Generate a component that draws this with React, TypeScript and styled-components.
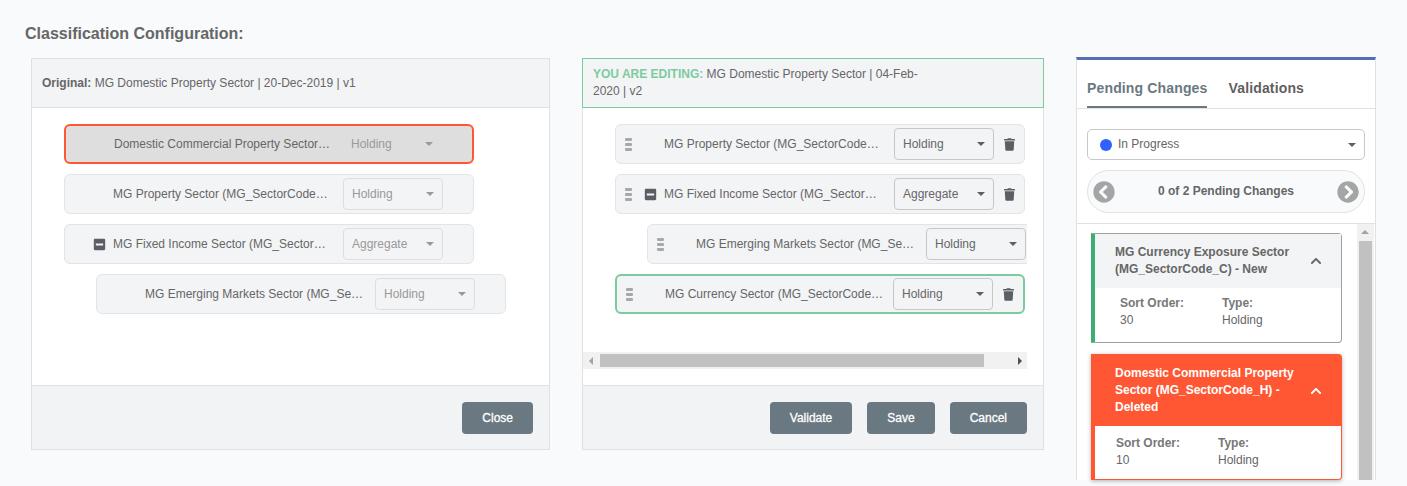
import styled, { createGlobalStyle } from "styled-components";
import {
  FaChevronCircleLeft,
  FaChevronCircleRight,
  FaChevronUp,
  FaMinusSquare,
  FaTrash,
} from "react-icons/fa";

const GlobalStyle = createGlobalStyle`
  html, body {
    margin: 0;
    height: 486px;
    overflow: hidden;
    background: #f9fafc;
    font-family: "Liberation Sans", Arial, sans-serif;
    color: #666;
    font-size: 12px;
  }
`;

const Page = styled.div`
  padding: 24px 25px 0;
  height: 486px;
  box-sizing: border-box;
`;

const Title = styled.h1`
  margin: 0 0 13px;
  font-size: 16px;
  line-height: 20px;
  font-weight: 700;
  color: #666;
`;

const Columns = styled.div`
  display: flex;
  align-items: flex-start;
  gap: 32px;
  margin-left: 6px;
`;

const Panel = styled.section<{ $width: number }>`
  display: flex;
  flex-direction: column;
  width: ${({ $width }) => $width}px;
  height: 392px;
  margin-top: 1px;
  box-sizing: border-box;
  background: #fff;
  border: 1px solid #dfe1e4;
  border-top: none;
`;

const PanelHeader = styled.header<{ $editing?: boolean }>`
  display: flex;
  align-items: center;
  box-sizing: border-box;
  height: 50px;
  margin: 0 ${({ $editing }) => ($editing ? "-1px" : "0")};
  padding: 0 10px;
  background: #f3f4f6;
  border: 1px solid ${({ $editing }) => ($editing ? "#7ccb9f" : "#dfe1e4")};
  ${({ $editing }) => ($editing ? "" : "border-width: 1px 0;")}
  line-height: 17px;
  font-size: 12px;
`;

const HeaderText = styled.div`
  max-width: 340px;
`;

const HeaderLabel = styled.strong<{ $editing?: boolean }>`
  color: ${({ $editing }) => ($editing ? "#7ccb9f" : "#666")};
`;

const PanelBody = styled.div<{ $editing?: boolean }>`
  flex: 1;
  min-height: 0;
  display: flex;
  flex-direction: column;
  padding: 0 ${({ $editing }) => ($editing ? "16px" : "0")} 16px 0;
`;

const Tree = styled.div`
  flex: 1;
  min-height: 0;
  overflow: hidden;
  display: flex;
  flex-direction: column;
  gap: 10px;
  padding: 16px 0 0 32px;
`;

const Row = styled.div<{ $indent?: boolean; $tone?: "deleted" | "added" }>`
  display: flex;
  flex: none;
  align-items: center;
  box-sizing: border-box;
  width: 410px;
  height: 40px;
  margin-left: ${({ $indent }) => ($indent ? "32px" : "0")};
  padding-right: 9px;
  border-radius: 6px;
  background: ${({ $tone }) => ($tone === "deleted" ? "#dedede" : "#f3f4f6")};
  border: ${({ $tone }) =>
    $tone === "deleted"
      ? "2px solid #ff5733"
      : $tone === "added"
        ? "2px solid #7ccb9f"
        : "1px solid #e2e4e7"};
`;

const HandleSlot = styled.div`
  flex: none;
  display: flex;
  justify-content: center;
  width: 24px;
`;

const ExpanderSlot = styled.div`
  flex: none;
  display: flex;
  width: 24px;
  padding-left: 4px;
  box-sizing: border-box;
  color: #5a5f66;
  font-size: 13px;
`;

const Label = styled.div<{ $tight?: boolean }>`
  flex: 1;
  min-width: 0;
  margin-right: ${({ $tight }) => ($tight ? "9px" : "10px")};
  white-space: nowrap;
  overflow: hidden;
  text-overflow: ellipsis;
  line-height: 17px;
`;

const TrashSlot = styled.div`
  flex: none;
  display: flex;
  width: 11px;
  margin-left: 10px;
  color: #5a5f66;
  font-size: 13px;
`;

const Select = styled.div<{ $disabled?: boolean; $shade?: boolean }>`
  flex: none;
  position: relative;
  box-sizing: border-box;
  width: 100px;
  height: 32px;
  line-height: 30px;
  padding-left: 8px;
  border-radius: 4px;
  border: 1px solid ${({ $disabled }) => ($disabled ? "#dcdee0" : "#c5c7c9")};
  background: ${({ $shade }) => ($shade ? "#dedede" : "#f3f4f6")};
  color: ${({ $disabled }) => ($disabled ? "#999" : "#666")};
`;

const Caret = styled.span<{ $muted?: boolean }>`
  position: absolute;
  top: 50%;
  right: 8px;
  margin-top: -2px;
  border-style: solid;
  border-width: 4px 4px 0;
  border-color: ${({ $muted }) => ($muted ? "#999" : "#5f5f5f")} transparent transparent;
`;

const HScroll = styled.div`
  position: relative;
  flex: none;
  display: flex;
  align-items: center;
  height: 17px;
  background: #f1f1f1;
`;

const HThumb = styled.div`
  width: 384px;
  height: 13px;
  margin-left: 17px;
  background: #c1c1c1;
`;

const ArrowLeft = styled.span`
  position: absolute;
  left: 6px;
  border-style: solid;
  border-width: 4px 4px 4px 0;
  border-color: transparent #a3a3a3 transparent transparent;
`;

const ArrowRight = styled.span`
  position: absolute;
  right: 5px;
  border-style: solid;
  border-width: 4px 0 4px 4px;
  border-color: transparent transparent transparent #505050;
`;

const ArrowUp = styled.span`
  position: absolute;
  top: 6px;
  left: 4px;
  border-style: solid;
  border-width: 0 4px 4px;
  border-color: transparent transparent #a3a3a3;
`;

const PanelFooter = styled.footer`
  flex: none;
  display: flex;
  justify-content: flex-end;
  align-items: flex-start;
  gap: 15px;
  box-sizing: border-box;
  height: 64px;
  padding: 16px 16px 0;
  background: #f2f3f5;
  border-top: 1px solid #dfe1e4;
`;

const Button = styled.button`
  height: 32px;
  padding: 0 20px;
  border: none;
  border-radius: 4px;
  background: #6a7881;
  color: #fff;
  font: 400 12px "Liberation Sans", Arial, sans-serif;
  -webkit-text-stroke: 0.3px #fff;
`;

const SidePanel = styled.aside`
  display: flex;
  flex-direction: column;
  box-sizing: border-box;
  width: 300px;
  height: 423px;
  background: #fff;
  border: 1px solid #dfe1e4;
  border-top: 3px solid #5470b5;
  border-bottom: none;
`;

const Tabs = styled.nav`
  flex: none;
  display: flex;
  gap: 21px;
  height: 49px;
  box-sizing: border-box;
  padding: 0 10px;
  border-bottom: 1px solid #dfe1e4;
`;

const Tab = styled.div<{ $active?: boolean }>`
  box-sizing: border-box;
  height: 48px;
  padding-top: 19px;
  line-height: 18px;
  font-size: 14px;
  font-weight: 700;
  letter-spacing: 0.15px;
  color: ${({ $active }) => ($active ? "#6a7881" : "#5f5f5f")};
  border-bottom: 2px solid ${({ $active }) => ($active ? "#6a7881" : "transparent")};
`;

const Filters = styled.div`
  flex: none;
  display: flex;
  flex-direction: column;
  gap: 10px;
  height: 115px;
  box-sizing: border-box;
  padding: 20px 10px 0;
  border-bottom: 1px solid #dfe1e4;
`;

const StatusSelect = styled.div`
  position: relative;
  display: flex;
  align-items: center;
  gap: 6px;
  box-sizing: border-box;
  height: 31px;
  padding: 0 0 2px 12px;
  border: 1px solid #c8c8c8;
  border-radius: 5px;
`;

const StatusDot = styled.span`
  width: 12px;
  height: 12px;
  margin-top: 2px;
  border-radius: 50%;
  background: #3060ff;
`;

const Pager = styled.div`
  display: flex;
  align-items: center;
  justify-content: space-between;
  box-sizing: border-box;
  height: 43px;
  padding: 0 5px;
  border: 1px solid #e2e2e2;
  border-radius: 22px;
  background: #f9fafc;
  color: #a5a5a5;
  font-size: 22px;
`;

const PagerText = styled.span`
  position: relative;
  top: -1px;
  color: #666;
  font-size: 12px;
  font-weight: 700;
`;

const ListArea = styled.div`
  flex: 1;
  min-height: 0;
  display: flex;
`;

const CardList = styled.div`
  flex: 1;
  display: flex;
  flex-direction: column;
  gap: 11px;
  padding: 9px 0 0 14px;
  min-width: 0;
`;

const Card = styled.article<{ $tone: "added" | "deleted" }>`
  flex: none;
  width: 251px;
  box-sizing: border-box;
  border-radius: 0 4px 4px 0;
  background: #fff;
  border: 1px solid ${({ $tone }) => ($tone === "added" ? "#a0a0a0" : "#ff5733")};
  border-left: 4px solid ${({ $tone }) => ($tone === "added" ? "#3eac75" : "#ff5733")};
  box-shadow: ${({ $tone }) => ($tone === "added" ? "none" : "0 1px 4px rgba(0, 0, 0, 0.3)")};
`;

const CardHeader = styled.div<{ $tone: "added" | "deleted" }>`
  display: flex;
  align-items: center;
  justify-content: space-between;
  padding: 10px 19px 10px 20px;
  background: ${({ $tone }) => ($tone === "added" ? "#f3f4f6" : "#ff5733")};
  color: ${({ $tone }) => ($tone === "added" ? "#666" : "#fff")};
  font-size: 12px;
`;

const CardTitle = styled.div`
  width: 185px;
  font-size: 12px;
  font-weight: 700;
  line-height: 17px;
`;

const CardBody = styled.div<{ $inset: number; $top: number; $bottom: number }>`
  display: grid;
  grid-template-columns: 102px 1fr;
  padding: ${({ $top }) => $top}px 0 ${({ $bottom }) => $bottom}px ${({ $inset }) => $inset}px;
  line-height: 17px;
`;

const FieldName = styled.div`
  font-weight: 700;
  color: #777;
`;

const VScroll = styled.div`
  position: relative;
  flex: none;
  width: 17px;
  margin-right: 1px;
  padding-top: 17px;
  box-sizing: border-box;
  background: #f1f1f1;
  display: flex;
  justify-content: center;
`;

const VThumb = styled.div`
  width: 13px;
  height: 100%;
  background: #c1c1c1;
`;

type TreeRow = {
  name: string;
  type: string;
  indent?: boolean;
  expander?: boolean;
  tone?: "deleted" | "added";
};

const GripIcon = () => (
  <svg width="7" height="13" viewBox="0 0 7 13" fill="#a8a8a8">
    <rect x="0" y="0" width="7" height="3" rx="1" />
    <rect x="0" y="5" width="7" height="3" rx="1" />
    <rect x="0" y="10" width="7" height="3" rx="1" />
  </svg>
);

const ClassRow = ({ row, editable }: { row: TreeRow; editable?: boolean }) => (
  <Row $indent={row.indent} $tone={row.tone}>
    <HandleSlot>{editable && <GripIcon />}</HandleSlot>
    <ExpanderSlot>{row.expander && <FaMinusSquare />}</ExpanderSlot>
    <Label $tight={row.tone === "added"}>{row.name}</Label>
    <Select $disabled={!editable} $shade={row.tone === "deleted"}>
      {row.type}
      <Caret $muted={!editable} />
    </Select>
    <TrashSlot>{editable && <FaTrash />}</TrashSlot>
  </Row>
);

const originalRows: TreeRow[] = [
  { name: "Domestic Commercial Property Sector (MG_SectorCode_H)", type: "Holding", tone: "deleted" },
  { name: "MG Property Sector (MG_SectorCode_A)", type: "Holding" },
  { name: "MG Fixed Income Sector (MG_SectorCode_B)", type: "Aggregate", expander: true },
  { name: "MG Emerging Markets Sector (MG_SectorCode_E)", type: "Holding", indent: true },
];

const editingRows: TreeRow[] = [
  { name: "MG Property Sector (MG_SectorCode_A)", type: "Holding" },
  { name: "MG Fixed Income Sector (MG_SectorCode_B)", type: "Aggregate", expander: true },
  { name: "MG Emerging Markets Sector (MG_SectorCode_E)", type: "Holding", indent: true },
  { name: "MG Currency Sector (MG_SectorCode_C)", type: "Holding", tone: "added" },
];

export default function App() {
  return (
    <Page>
      <GlobalStyle />
      <Title>Classification Configuration:</Title>
      <Columns>
        <Panel $width={519}>
          <PanelHeader>
            <HeaderText>
              <HeaderLabel>Original:</HeaderLabel> MG Domestic Property Sector | 20-Dec-2019 | v1
            </HeaderText>
          </PanelHeader>
          <PanelBody>
            <Tree>
              {originalRows.map((row) => (
                <ClassRow key={row.name} row={row} />
              ))}
            </Tree>
          </PanelBody>
          <PanelFooter>
            <Button>Close</Button>
          </PanelFooter>
        </Panel>

        <Panel $width={462}>
          <PanelHeader $editing>
            <HeaderText>
              <HeaderLabel $editing>YOU ARE EDITING:</HeaderLabel> MG Domestic Property Sector | 04-Feb-2020 | v2
            </HeaderText>
          </PanelHeader>
          <PanelBody $editing>
            <Tree>
              {editingRows.map((row) => (
                <ClassRow key={row.name} row={row} editable />
              ))}
            </Tree>
            <HScroll>
              <ArrowLeft />
              <HThumb />
              <ArrowRight />
            </HScroll>
          </PanelBody>
          <PanelFooter>
            <Button>Validate</Button>
            <Button>Save</Button>
            <Button>Cancel</Button>
          </PanelFooter>
        </Panel>

        <SidePanel>
          <Tabs>
            <Tab $active>Pending Changes</Tab>
            <Tab>Validations</Tab>
          </Tabs>
          <Filters>
            <StatusSelect>
              <StatusDot />
              In Progress
              <Caret />
            </StatusSelect>
            <Pager>
              <FaChevronCircleLeft />
              <PagerText>0 of 2 Pending Changes</PagerText>
              <FaChevronCircleRight />
            </Pager>
          </Filters>
          <ListArea>
            <CardList>
              <Card $tone="added">
                <CardHeader $tone="added">
                  <CardTitle>MG Currency Exposure Sector (MG_SectorCode_C) - New</CardTitle>
                  <FaChevronUp />
                </CardHeader>
                <CardBody $inset={25} $top={7} $bottom={13}>
                  <FieldName>Sort Order:</FieldName>
                  <FieldName>Type:</FieldName>
                  <div>30</div>
                  <div>Holding</div>
                </CardBody>
              </Card>
              <Card $tone="deleted">
                <CardHeader $tone="deleted">
                  <CardTitle>Domestic Commercial Property Sector (MG_SectorCode_H) - Deleted</CardTitle>
                  <FaChevronUp />
                </CardHeader>
                <CardBody $inset={21} $top={9} $bottom={10}>
                  <FieldName>Sort Order:</FieldName>
                  <FieldName>Type:</FieldName>
                  <div>10</div>
                  <div>Holding</div>
                </CardBody>
              </Card>
            </CardList>
            <VScroll>
              <ArrowUp />
              <VThumb />
            </VScroll>
          </ListArea>
        </SidePanel>
      </Columns>
    </Page>
  );
}
